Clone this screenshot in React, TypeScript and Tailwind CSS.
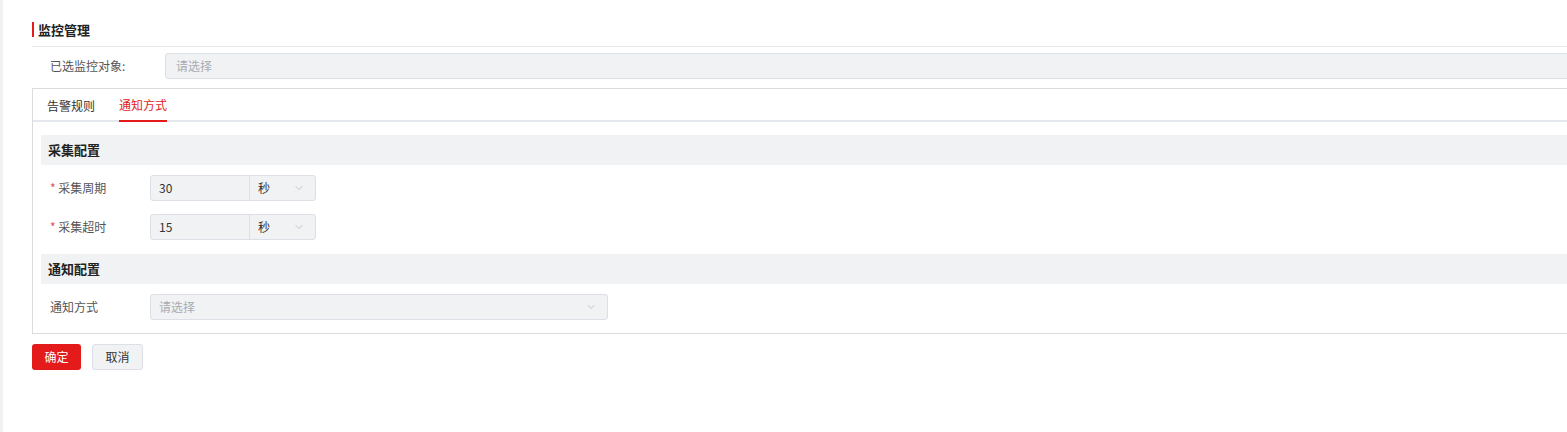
import { ChevronDown } from "lucide-react";

const font = { fontFamily: '"Noto Sans CJK SC", "Liberation Sans", sans-serif' };

function UnitInput({ value }: { value: string }) {
  return (
    <div className="flex h-[26px] w-[166px] rounded-[3px] border border-[#dcdfe6] bg-[#f1f2f4] text-[12px] text-[#333]">
      <div className="flex w-[99px] items-center border-r border-[#dcdfe6] pl-[8px]">{value}</div>
      <div className="flex flex-1 items-center justify-between pl-[8px] pr-[10px]">
        <span>秒</span>
        <ChevronDown className="h-[12px] w-[12px] text-[#b0b3b8]" strokeWidth={1.5} />
      </div>
    </div>
  );
}

export default function App() {
  return (
    <div className="relative h-[432px] w-[1567px] overflow-hidden bg-white" style={font}>
      <div className="absolute left-0 top-0 h-full w-[3px] bg-[#f0f1f3]" />
      <div className="ml-[32px] w-[1560px] pt-[21px]">
        {/* title */}
        <div className="flex h-[16px] items-center">
          <div className="h-[15px] w-[2px] bg-[#e31b1b]" />
          <span className="ml-[4px] text-[13px] font-bold leading-none text-[#222]">监控管理</span>
        </div>
        <div className="mt-[9px] h-px bg-[#e8e8e8]" />

        {/* selected target */}
        <div className="mt-[6px] flex h-[26px] items-center">
          <span className="w-[133px] pl-[18px] text-[12px] text-[#555]">已选监控对象:</span>
          <div className="flex h-[26px] flex-1 items-center rounded-[3px] border border-[#dcdfe6] bg-[#f1f2f4] pl-[10px] text-[12px] text-[#a8abb2]">
            请选择
          </div>
        </div>

        {/* tabs card */}
        <div className="mt-[9px] border border-[#dcdcdc] pb-[13px]">
          <div className="flex h-[33px] items-end border-b-2 border-[#e4e7ed] pl-[14px]">
            <div className="mb-[-2px] flex h-[33px] items-center text-[12px] text-[#333]">告警规则</div>
            <div className="mb-[-2px] ml-[24px] flex h-[33px] items-center border-b-2 border-[#e31b1b] text-[12px] text-[#e31b1b]">
              通知方式
            </div>
          </div>

          <div className="pl-[8px] pt-[13px]">
            <div className="flex h-[30px] items-center bg-[#f1f2f4] pl-[7px] text-[13px] font-bold text-[#222]">采集配置</div>

            <div className="mt-[10px] flex items-center">
              <span className="w-[109px] pl-[9px] text-[12px] text-[#555]">
                <span className="text-[#e35050]">*</span> 采集周期
              </span>
              <UnitInput value="30" />
            </div>
            <div className="mt-[13px] flex items-center">
              <span className="w-[109px] pl-[9px] text-[12px] text-[#555]">
                <span className="text-[#e35050]">*</span> 采集超时
              </span>
              <UnitInput value="15" />
            </div>

            <div className="mt-[14px] flex h-[30px] items-center bg-[#f1f2f4] pl-[7px] text-[13px] font-bold text-[#222]">通知配置</div>

            <div className="mt-[10px] flex items-center">
              <span className="w-[109px] pl-[9px] text-[12px] text-[#555]">通知方式</span>
              <div className="flex h-[26px] w-[458px] items-center justify-between rounded-[3px] border border-[#dcdfe6] bg-[#f1f2f4] pl-[8px] pr-[10px] text-[12px] text-[#a8abb2]">
                <span>请选择</span>
                <ChevronDown className="h-[12px] w-[12px] text-[#b0b3b8]" strokeWidth={1.5} />
              </div>
            </div>
          </div>
        </div>

        {/* actions */}
        <div className="mt-[10px] flex gap-[11px]">
          <button className="h-[26px] w-[49px] rounded-[3px] bg-[#e31b1b] text-[12px] text-white">确定</button>
          <button className="h-[26px] w-[51px] rounded-[3px] border border-[#dcdfe6] bg-[#f1f2f4] text-[12px] text-[#333]">取消</button>
        </div>
      </div>
    </div>
  );
}
